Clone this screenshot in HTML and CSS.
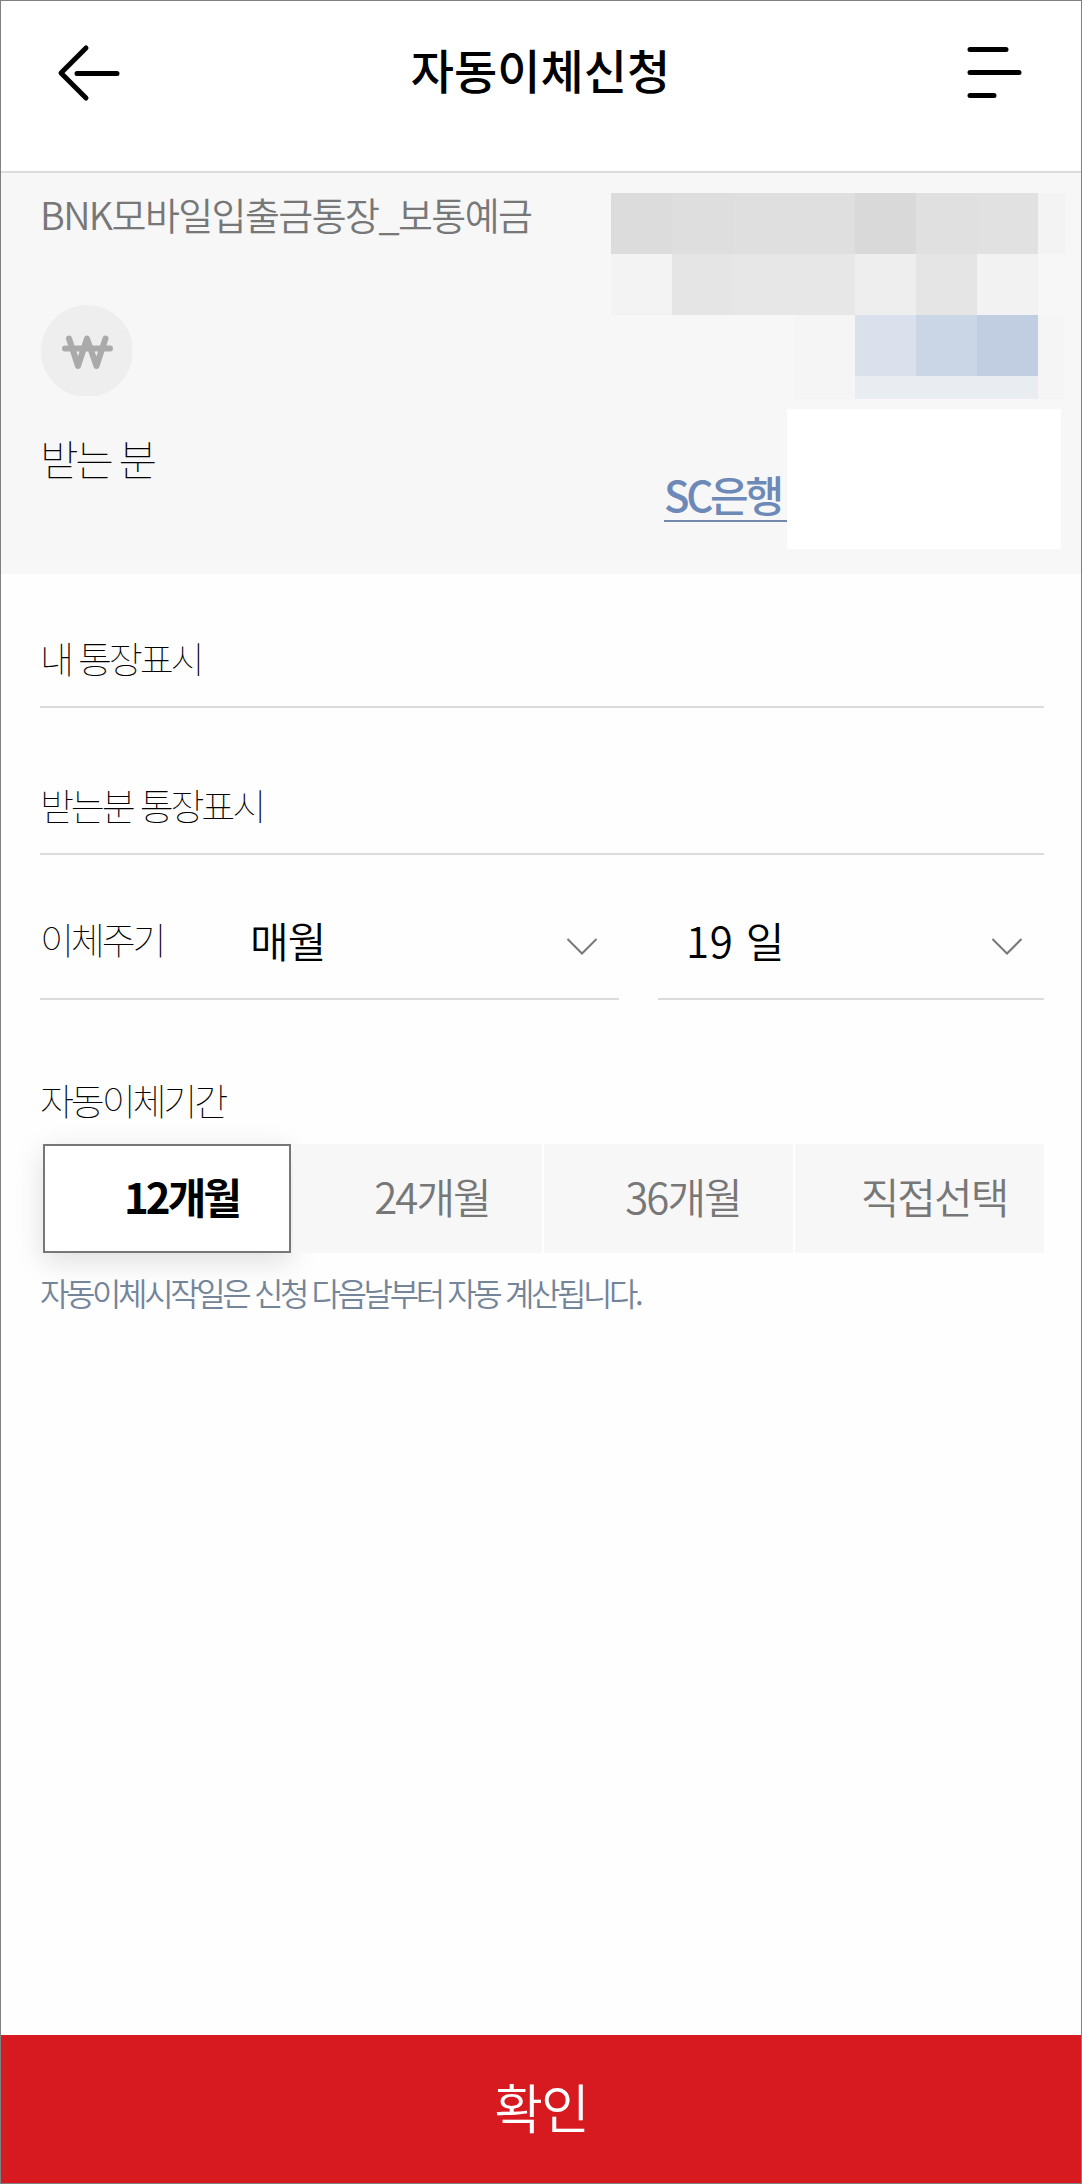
FILE: index.html
```html
<!DOCTYPE html>
<html lang="ko">
<head>
    <meta charset="UTF-8">
    <meta name="viewport" content="width=device-width, initial-scale=1.0">
    <title>자동이체신청</title>

    <link rel="stylesheet" href="styles.css">

</head>
<body>

<div class="page">
    <header class="header">
        <svg class="back" viewBox="0 0 64 58">
            <path d="M29 4 L4 29 L29 54 M20 29.5 H60"/>
        </svg>
        <h1>자동이체신청</h1>
        <svg class="menu" viewBox="0 0 56 54">
            <path d="M3 4.500 H39 M3 27.500 H52 M3 50.500 H27"/>
        </svg>
    </header>

    <section class="account">
        <div class="from">
            <p class="account-name">BNK모바일입출금통장_보통예금</p>
            <svg class="won" viewBox="0 0 91 91">
                <circle class="won-bg" cx="46" cy="46" r="46"/>
                <path class="won-sign" d="M28 33.500 L37 61 L46 33.500 L55.500 61 L64.500 33.500 M24 43.500 H69"/>
            </svg>
            <p class="receiver">받는 분</p>
        </div>
        <div class="to">
            <!-- masked account number -->
            <div class="mask">
                <i class="g1"></i><i class="g2"></i><i class="g3"></i><i class="g3"></i><i class="g4"></i><i class="g5"></i><i class="g6"></i><i class="g7"></i>
                <i class="g7"></i><i class="g8"></i><i class="g9"></i><i class="g9"></i><i class="g10"></i><i class="g8"></i><i class="g11"></i><i></i>
                <i></i><i></i><i></i><i class="g12"></i><i class="b1"></i><i class="b2"></i><i class="b3"></i><i class="g12"></i>
                <i></i><i></i><i></i><i class="g12"></i><i class="b4"></i><i class="b4"></i><i class="b4"></i><i class="g12"></i>
            </div>
            <div class="bank">
                <a class="bank-name">SC은행</a>
                <div class="cover"></div>
            </div>
        </div>
    </section>

    <main class="form">
        <div class="field first"><span>내 통장표시</span></div>
        <div class="field second"><span>받는분 통장표시</span></div>

        <div class="cycle">
            <div class="select month">
                <span class="label">이체주기</span>
                <span class="value">매월</span>
                <svg class="chevron" viewBox="0 0 32 20"><path d="M1.500 2 L16 16.500 L30.500 2"/></svg>
            </div>
            <div class="select day">
                <span class="value">19 일</span>
                <svg class="chevron" viewBox="0 0 32 20"><path d="M1.500 2 L16 16.500 L30.500 2"/></svg>
            </div>
        </div>

        <p class="period-label">자동이체기간</p>
        <div class="period">
            <button class="active">12개월</button>
            <button>24개월</button>
            <button>36개월</button>
            <button>직접선택</button>
        </div>
        <p class="note">자동이체시작일은 신청 다음날부터 자동 계산됩니다.</p>
    </main>

    <button class="confirm">확인</button>
</div>

</body>
</html>
```
FILE: styles.css
```css
*{
    box-sizing: border-box;
}

body{
    margin: 0;
    font-family: "Noto Sans CJK KR", sans-serif;
    color: #000;
}

h1, p{
    margin: 0;
    font-weight: normal;
}

svg{
    display: block;
    fill: none;
}

button{
    font-family: inherit;
    border: none;
    padding: 0;
}

.page{
    display: flex;
    flex-direction: column;
    height: 2184px;
    border: 1px solid #808080;
    background-color: #fefefe;
    white-space: nowrap;
}

/* header */
.header{
    display: flex;
    justify-content: space-between;
    height: 172px;
    padding: 43px 58px 0 56px;
    border-bottom: 2px solid #dcdcdc;
    background-color: #fff;
}

.header h1{
    margin-top: -3px;
    padding-right: 7px;
    font-size: 47px;
    font-weight: 500;
    line-height: 56px;
}

.back{
    width: 64px;
    height: 58px;
    stroke: #000;
    stroke-width: 5;
    stroke-linecap: round;
    stroke-linejoin: round;
}

.menu{
    width: 56px;
    height: 54px;
    margin-top: 1px;
    stroke: #000;
    stroke-width: 5;
    stroke-linecap: round;
}

/* account */
.account{
    display: flex;
    justify-content: space-between;
    height: 401px;
    padding: 20px 16px 0 39px;
    background-color: #f7f7f7;
}

.account-name{
    margin-top: -1px;
    font-size: 38px;
    font-weight: 350;
    line-height: 44px;
    letter-spacing: -1.6px;
    color: #777;
}

.won{
    width: 91px;
    height: 91px;
    margin: 69px 0 0 1px;
}

.won-bg{
    fill: #eee;
}

.won-sign{
    stroke: #aaa;
    stroke-width: 6;
    stroke-linecap: round;
    stroke-linejoin: round;
}

.receiver{
    margin-top: 37px;
    font-size: 42px;
    font-weight: 100;
    line-height: 50px;
    letter-spacing: -3.5px;
}

.mask{
    display: grid;
    grid-template-columns: repeat(7, 61px) 27px;
    grid-template-rows: repeat(3, 61px) 23px;
}

.g1{ background-color: #dcdcdc; }
.g2{ background-color: #dedede; }
.g3{ background-color: #dfdfdf; }
.g4{ background-color: #d9d9d9; }
.g5{ background-color: #e0e0e0; }
.g6{ background-color: #e1e1e1; }
.g7{ background-color: #f3f3f3; }
.g8{ background-color: #e5e5e5; }
.g9{ background-color: #e7e7e7; }
.g10{ background-color: #eee; }
.g11{ background-color: #f2f2f2; }
.g12{ background-color: #f5f5f5; }
.b1{ background-color: #dbe1ec; }
.b2{ background-color: #cad6e5; }
.b3{ background-color: #c1cde0; }
.b4{ background-color: #e9edf2; }

.bank{
    display: flex;
    justify-content: flex-end;
    margin-top: 10px;
    padding-right: 4px;
}

.bank-name{
    width: 123px;
    height: 113px;
    padding: 61px 0 0 0;
    border-bottom: 2px solid #7489ab;
    font-size: 42px;
    font-weight: 500;
    line-height: 48px;
    letter-spacing: -3.3px;
    color: #6d89b7;
}

.cover{
    width: 274px;
    height: 140px;
    background-color: #fff;
}

/* form */
.form{
    flex: 1;
    padding: 0 37px 0 39px;
}

.field,
.select{
    border-bottom: 2px solid #dcdcdc;
}

.field,
.label,
.period-label{
    font-size: 37px;
    font-weight: 100;
    line-height: 44px;
    letter-spacing: -3.2px;
}

.first{
    height: 134px;
    padding-top: 62px;
}

.second{
    height: 147px;
    padding-top: 75px;
}

.cycle{
    display: flex;
    gap: 39px;
    height: 145px;
}

.select{
    display: flex;
    align-items: flex-start;
    padding: 62px 21px 0 0;
}

.month{
    width: 579px;
}

.day{
    flex: 1;
    padding-left: 28px;
}

.label{
    width: 210px;
}

.value{
    margin-top: -1px;
    font-size: 42px;
    font-weight: 350;
    line-height: 48px;
    letter-spacing: -1px;
}

.day .value{
    letter-spacing: 0.6px;
}

.chevron{
    width: 32px;
    height: 20px;
    margin: 20px 0 0 auto;
    stroke: #777;
    stroke-width: 2;
}

.period-label{
    margin-top: 78px;
}

.period{
    display: grid;
    grid-template-columns: 251px 249px 249px 249px;
    gap: 2px;
    height: 109px;
    margin-top: 22px;
}

.period button{
    padding: 0 0 6px 29px;
    background-color: #f7f7f7;
    font-size: 42px;
    font-weight: 350;
    letter-spacing: -2px;
    color: #777;
}

.period .active{
    margin-left: 3px;
    border: 2px solid #777;
    background-color: #fff;
    box-shadow: 0 8px 28px rgba(0, 0, 0, 0.13);
    font-weight: 700;
    letter-spacing: -3px;
    color: #000;
}

.note{
    margin-top: 20px;
    font-size: 32px;
    font-weight: 350;
    line-height: 38px;
    letter-spacing: -3.4px;
    color: #748499;
}

.confirm{
    height: 148px;
    padding-bottom: 6px;
    background-color: #d71920;
    font-size: 53px;
    font-weight: 350;
    letter-spacing: -2px;
    color: #fff;
}
```
